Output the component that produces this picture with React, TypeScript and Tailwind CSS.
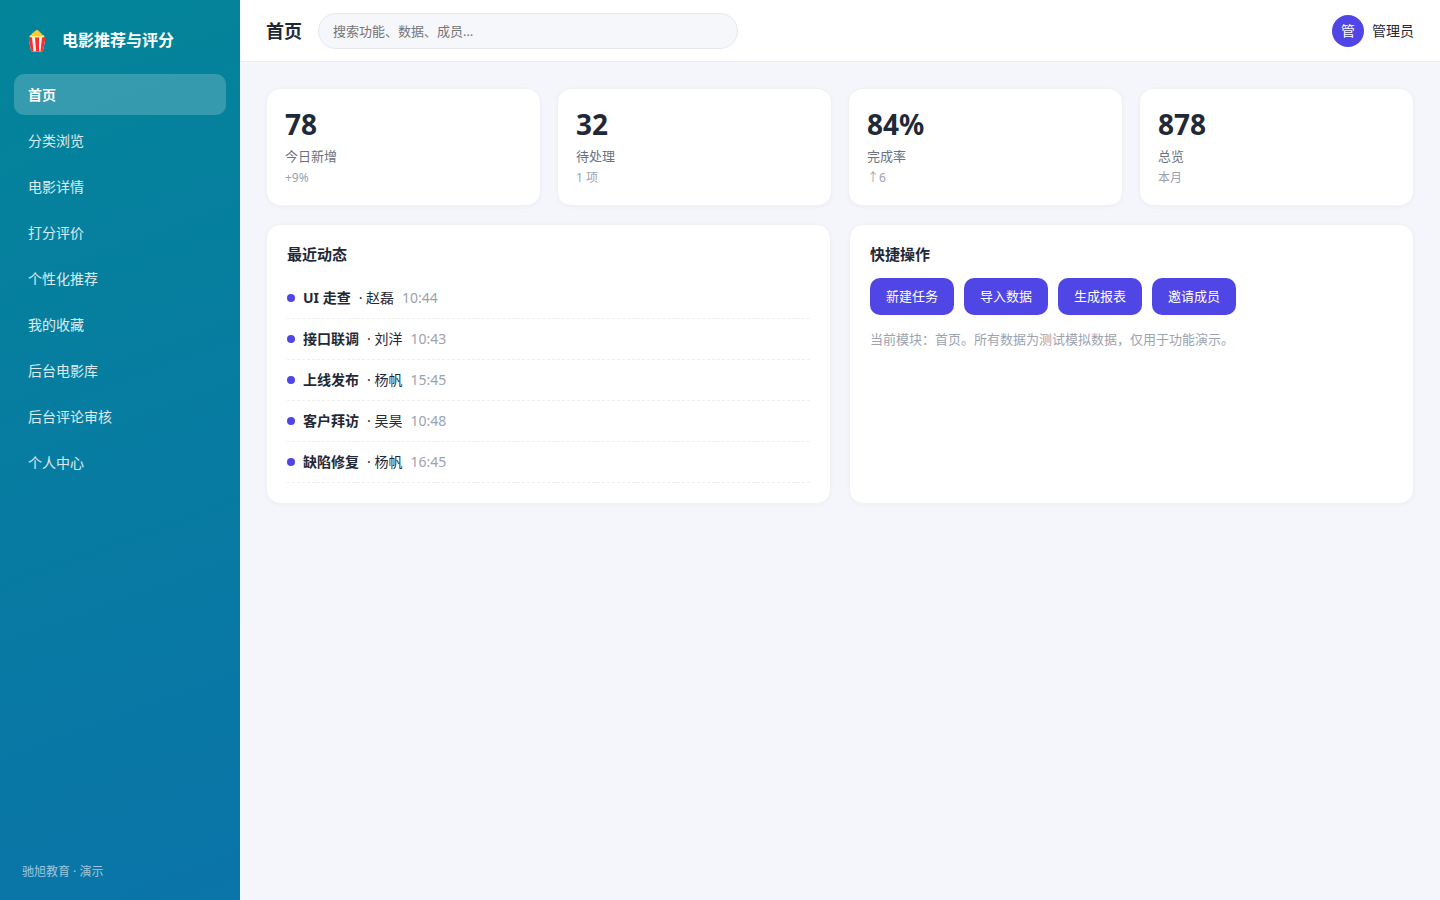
type Stat = {
  value: string;
  label: string;
  sub: string;
};

type Activity = {
  title: string;
  user: string;
  time: string;
};

const navItems = [
  "首页",
  "分类浏览",
  "电影详情",
  "打分评价",
  "个性化推荐",
  "我的收藏",
  "后台电影库",
  "后台评论审核",
  "个人中心",
];

const stats: Stat[] = [
  { value: "78", label: "今日新增", sub: "+9%" },
  { value: "32", label: "待处理", sub: "1 项" },
  { value: "84%", label: "完成率", sub: "↑6" },
  { value: "878", label: "总览", sub: "本月" },
];

const activities: Activity[] = [
  { title: "UI 走查", user: "赵磊", time: "10:44" },
  { title: "接口联调", user: "刘洋", time: "10:43" },
  { title: "上线发布", user: "杨帆", time: "15:45" },
  { title: "客户拜访", user: "吴昊", time: "10:48" },
  { title: "缺陷修复", user: "杨帆", time: "16:45" },
];

const actions = ["新建任务", "导入数据", "生成报表", "邀请成员"];

function PopcornIcon() {
  return (
    <svg viewBox="0 0 18 24" className="h-6 w-[18px]" aria-hidden="true">
      <path d="M1 9h16v4l-2 9.500q-.1 1-1 1H4q-.9 0-1-1L1 13z" fill="#f7f7f7" />
      <path d="M1 9h3l1.500 14.500H4q-.9 0-1-1L1 13z" fill="#f92f2f" />
      <path d="M7 9h4v14.500H8z" fill="#f92f2f" />
      <path d="M14 9h3v4l-2 9.500q-.1 1-1 1h-1.500z" fill="#f92f2f" />
      <path
        d="M1.500 9Q1.500 7 3.500 6.500 4 4.500 6 4.300 6.500 2.500 8 2.500 9 1 10 2.500q1.500.2 1.700 1.800 1.800.2 2.200 2.200 2.300.4 2.600 2.500z"
        fill="#fdc830"
      />
      <path d="M1.500 8.500q1.500-1.500 3-.5 1.500-1 3 0 1.500-1 3 0 1.500-1 3 0 1.500-1 3 .5-1.500 1.500-3 .8-1.500.8-3 0-1.500.8-3 0-1.500.8-3 0-1.500.7-3-.8z" fill="#fff176" />
    </svg>
  );
}

function Sidebar() {
  return (
    <aside className="flex w-60 shrink-0 flex-col bg-[linear-gradient(160deg,#038499_0%,#0b74a9_100%)] px-3.5 pt-5 pb-[18px] text-white">
      <div className="mb-3.5 flex h-10 items-center gap-4 px-3.5">
        <PopcornIcon />
        <span className="text-base font-bold">电影推荐与评分</span>
      </div>
      <nav className="flex flex-col gap-[5px]">
        {navItems.map((item, i) => (
          <a
            key={item}
            href="#"
            className={
              i === 0
                ? "flex h-[41px] items-center rounded-[10px] bg-white/20 px-3.5 text-sm font-bold"
                : "flex h-[41px] items-center rounded-[10px] px-3.5 text-sm text-white/85"
            }
          >
            {item}
          </a>
        ))}
      </nav>
      <div className="mt-auto px-2 text-xs leading-5 text-white/60">驰旭教育 · 演示</div>
    </aside>
  );
}

function Header() {
  return (
    <header className="flex h-[62px] items-center gap-4 border-b border-[#eceef3] bg-white px-[26px]">
      <h1 className="text-lg font-bold">首页</h1>
      <input
        type="search"
        aria-label="搜索"
        placeholder="搜索功能、数据、成员…"
        className="h-9 w-[420px] rounded-full border border-[#e5e7f0] bg-[#f6f7fb] px-3.5 text-[13px] outline-none placeholder:text-[#757575]"
      />
      <div className="ml-auto flex items-center gap-2">
        <div className="flex size-8 items-center justify-center rounded-full bg-[#4f46e5] text-sm text-white">管</div>
        <span className="text-sm">管理员</span>
      </div>
    </header>
  );
}

function StatCard({ stat }: { stat: Stat }) {
  return (
    <div className="rounded-[14px] border border-[#eff1f5] bg-white px-[18px] pt-[18px] pb-4 shadow-[0_1px_4px_rgba(30,41,59,0.03)]">
      <div className="text-[28px] leading-[34px] font-bold">{stat.value}</div>
      <div className="mt-1 text-[13px] leading-[22px] text-[#6b7280]">{stat.label}</div>
      <div className="text-xs leading-[22px] text-[#9ca3af]">{stat.sub}</div>
    </div>
  );
}

function Panel({ title, children }: { title: string; children: React.ReactNode }) {
  return (
    <section className="rounded-[14px] border border-[#eff1f5] bg-white p-5 shadow-[0_1px_4px_rgba(30,41,59,0.03)]">
      <h2 className="mb-[15px] text-[15px] leading-[18px] font-bold">{title}</h2>
      {children}
    </section>
  );
}

export default function App() {
  return (
    <div className="flex min-h-screen bg-[#f5f6fb] font-['Noto_Sans','Noto_Sans_CJK_SC',sans-serif] text-[#1f2937]">
      <Sidebar />
      <div className="min-w-0 flex-1">
        <Header />
        <main className="p-[26px]">
          <div className="grid grid-cols-4 gap-4">
            {stats.map((stat) => (
              <StatCard key={stat.label} stat={stat} />
            ))}
          </div>
          <div className="mt-[18px] grid grid-cols-2 gap-[18px]">
            <Panel title="最近动态">
              <ul>
                {activities.map((a) => (
                  <li
                    key={a.title}
                    className="flex h-[41px] items-center gap-2 border-b border-dashed border-[#eceef1] text-sm"
                  >
                    <span className="size-2 rounded-full bg-[#4f46e5]" />
                    <b>{a.title}</b>
                    <span>· {a.user}</span>
                    <time className="text-[#9ca3af]">{a.time}</time>
                  </li>
                ))}
              </ul>
            </Panel>
            <Panel title="快捷操作">
              <div className="flex flex-wrap gap-2.5">
                {actions.map((action) => (
                  <button
                    key={action}
                    type="button"
                    className="h-[37px] rounded-[10px] bg-[#4f46e5] px-4 text-[13px] text-white"
                  >
                    {action}
                  </button>
                ))}
              </div>
              <p className="mt-3.5 text-[13px] leading-5 text-[#9ca3af]">
                当前模块：首页。所有数据为测试模拟数据，仅用于功能演示。
              </p>
            </Panel>
          </div>
        </main>
      </div>
    </div>
  );
}
